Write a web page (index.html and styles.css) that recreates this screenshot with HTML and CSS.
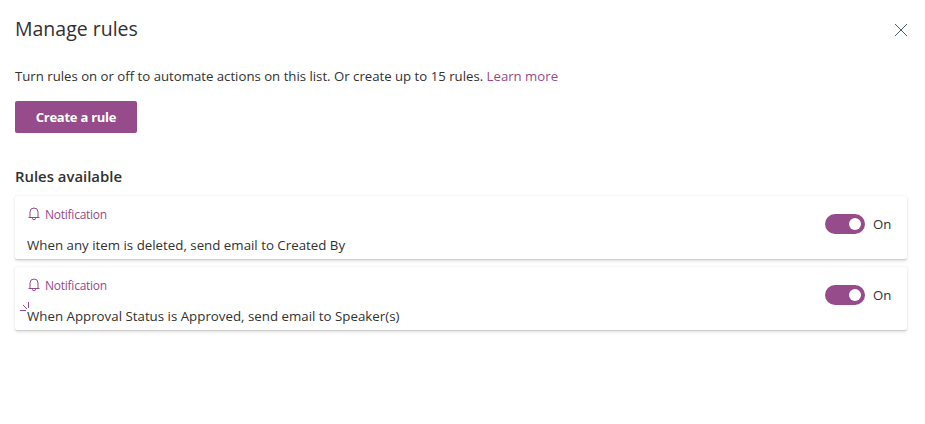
FILE: index.html
```html
<!DOCTYPE html>
<html lang="en">
<head>
  <meta charset="UTF-8" />
  <meta name="viewport" content="width=device-width, initial-scale=1.0"/>
  <title>Manage rules</title>
  <link rel="stylesheet" href="styles.css">
</head>
<body>

<div class="panel">
  <header class="panel-header">
    <h1>Manage rules</h1>
    <button class="close-btn" aria-label="Close">
      <svg width="14" height="14" viewBox="0 0 14 14"><path d="M1 1l12 12M13 1L1 13"/></svg>
    </button>
  </header>

  <p class="intro"><span>Turn rules on or off to automate actions on this list. Or create up to 15 rules.</span> <a href="#">Learn more</a></p>
  <button class="create-btn">Create a rule</button>

  <h2>Rules available</h2>

  <div class="rule-list">
    <div class="rule">
      <div class="rule-info">
        <div class="rule-type">
          <svg class="bell" width="12" height="14" viewBox="0 0 12 14"><path d="M2 10.500V5a4 4 0 0 1 8 0v5.500M.5 10.500h11M4.500 11v.5a1.500 1.200 0 0 0 3 0V11"/></svg>
          <span>Notification</span>
        </div>
        <div class="rule-text">When any item is deleted, send email to Created By</div>
      </div>
      <button class="toggle" role="switch" aria-checked="true" aria-label="Rule on"></button>
      <span class="toggle-label">On</span>
    </div>

    <div class="rule">
      <div class="rule-info">
        <div class="rule-type">
          <svg class="bell" width="12" height="14" viewBox="0 0 12 14"><path d="M2 10.500V5a4 4 0 0 1 8 0v5.500M.5 10.500h11M4.500 11v.5a1.500 1.200 0 0 0 3 0V11"/></svg>
          <span>Notification</span>
        </div>
        <div class="rule-text">When Approval Status is Approved, send email to Speaker(s)</div>
      </div>
      <button class="toggle" role="switch" aria-checked="true" aria-label="Rule on"></button>
      <span class="toggle-label">On</span>
      <!-- "new" sparkle -->
      <svg class="sparkle" width="10" height="10" viewBox="0 0 10 10"><path d="M0 8.500h6M3 3l4 4M8.500 0v6"/></svg>
    </div>
  </div>
</div>

</body>
</html>
```

FILE: styles.css
```css
* {
  box-sizing: border-box;
}

body {
  margin: 0;
  min-height: 100vh;
  background: #fff;
  color: #323130;
  font-family: "Open Sans", "Noto Sans", sans-serif;
  font-size: 13.2px;
}

.panel {
  padding: 14px 18px 20px 15px;
}

.panel-header {
  display: flex;
  align-items: center;
  height: 32px;
}

h1 {
  flex: 1;
  margin: -2px 0 0;
  font-size: 19.5px;
  font-weight: 500;
  line-height: 28px;
}

button {
  padding: 0;
  border: none;
  font-family: inherit;
  cursor: pointer;
}

.close-btn {
  display: flex;
  align-items: center;
  justify-content: center;
  width: 14px;
  height: 32px;
  margin-right: -1px;
  background: none;
}

.close-btn svg {
  fill: none;
  stroke: #4a5c70;
  stroke-width: 1;
}

.intro {
  margin: 20px 0 15px;
  line-height: 20px;
  white-space: nowrap;
}

.intro a {
  color: #964b8a;
  text-decoration: none;
}

.create-btn {
  display: block;
  width: 122px;
  height: 32px;
  border-radius: 2px;
  background: #964b8a;
  color: #fff;
  font-size: 13px;
  font-weight: 700;
  letter-spacing: -0.25px;
}

h2 {
  margin: 33px 0 9px;
  font-size: 14.9px;
  font-weight: 600;
  line-height: 21px;
}

.rule-list {
  display: flex;
  flex-direction: column;
  gap: 8px;
}

.rule {
  position: relative;
  display: flex;
  align-items: flex-start;
  height: 63px;
  padding: 9px 16px 0 12px;
  border-radius: 2px;
  box-shadow: 0 1.6px 3.6px rgba(0,0,0,0.13), 0 0.3px 0.9px rgba(0,0,0,0.11);
}

.rule-info {
  flex: 1;
}

.rule-type {
  display: flex;
  align-items: center;
  gap: 5px;
  height: 18px;
  padding-left: 1px;
  color: #964b8a;
  font-size: 12px;
  letter-spacing: -0.25px;
}

.bell,
.sparkle {
  fill: none;
  stroke: #964b8a;
  stroke-width: 1;
}

.rule-text {
  margin-top: 12px;
  font-size: 13.3px;
  line-height: 20px;
}

.toggle {
  display: flex;
  align-items: center;
  justify-content: flex-end;
  width: 40px;
  height: 20px;
  margin-top: 9px;
  padding: 0 4px;
  border-radius: 10px;
  background: #964b8a;
}

.toggle::after {
  content: "";
  width: 12px;
  height: 12px;
  border-radius: 50%;
  background: #fff;
}

.toggle-label {
  width: 18px;
  margin: 9px 0 0 8px;
  line-height: 20px;
}

.sparkle {
  position: absolute;
  left: 5px;
  top: 35px;
}
```
